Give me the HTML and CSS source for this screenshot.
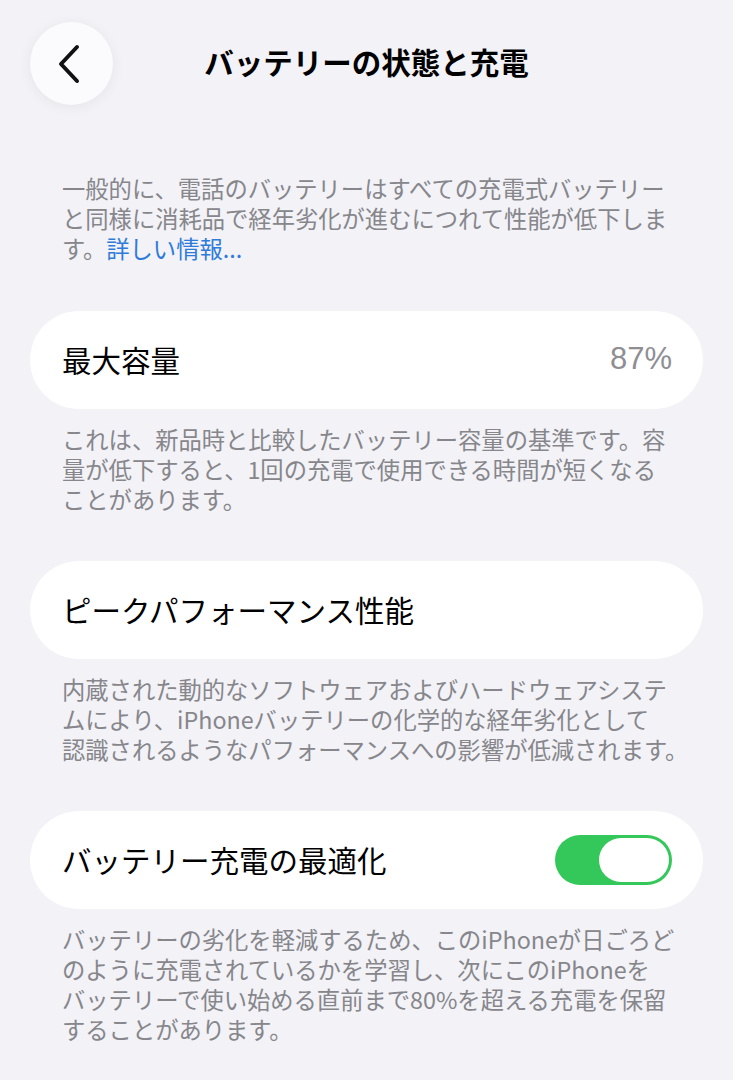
FILE: index.html
```html
<!DOCTYPE html>
<html lang="ja">
<head>
<meta charset="utf-8">
<link rel="stylesheet" href="styles.css">
</head>
<body>
<div class="page">
  <header class="nav">
    <button class="back" aria-label="戻る">
      <svg width="24" height="40" viewBox="0 0 24 40"><path d="M20 3 L4 20 L20 37" fill="none" stroke="#111" stroke-width="4" stroke-linecap="round" stroke-linejoin="round"/></svg>
    </button>
    <h1 class="title">バッテリーの状態と充電</h1>
    <span></span>
  </header>

  <p class="note intro">一般的に、電話のバッテリーはすべての充電式バッテリー<br>と同様に消耗品で経年劣化が進むにつれて性能が低下しま<br>す。<a class="link">詳しい情報...</a></p>

  <div class="card card-first">
    <span class="label">最大容量</span>
    <span class="value">87%</span>
  </div>
  <p class="note">これは、新品時と比較したバッテリー容量の基準です。容<br>量が低下すると、1回の充電で使用できる時間が短くなる<br>ことがあります。</p>

  <div class="card">
    <span class="label">ピークパフォーマンス性能</span>
  </div>
  <p class="note">内蔵された動的なソフトウェアおよびハードウェアシステ<br>ムにより、iPhoneバッテリーの化学的な経年劣化として<br>認識されるようなパフォーマンスへの影響が低減されます。</p>

  <div class="card">
    <span class="label">バッテリー充電の最適化</span>
    <span class="toggle"><span class="knob"></span></span>
  </div>
  <p class="note">バッテリーの劣化を軽減するため、このiPhoneが日ごろど<br>のように充電されているかを学習し、次にこのiPhoneを<br>バッテリーで使い始める直前まで80%を超える充電を保留<br>することがあります。</p>
</div>
</body>
</html>
```
FILE: styles.css
```css
* { box-sizing: border-box; }
html, body { margin: 0; padding: 0; }
body {
  background: #f2f2f7;
  font-family: "Noto Sans CJK JP", "Noto Sans", sans-serif;
  color: #000;
}
.page {
  width: 733px;
  padding: 22px 30px 0;
}
.nav {
  display: grid;
  grid-template-columns: 83px 1fr 83px;
  align-items: center;
  height: 83px;
}
.back {
  width: 83px;
  height: 83px;
  border-radius: 50%;
  border: none;
  background: #fbfbfd;
  box-shadow: 0 2px 14px rgba(0,0,0,0.06);
  display: flex;
  align-items: center;
  justify-content: center;
  padding: 0 6px 0 0;
}
.title {
  margin: 0 0 5px;
  text-align: center;
  font-size: 29.5px;
  font-weight: 700;
  line-height: 40px;
  white-space: nowrap;
}
.note {
  margin: 0;
  padding: 0 32px;
  font-size: 23.3px;
  line-height: 30px;
  color: #86868b;
  white-space: nowrap;
}
.intro { margin-top: 68px; }
.link { color: #2f7bd9; }
.card {
  background: #fff;
  border-radius: 50px;
  height: 98px;
  margin-top: 47px;
  margin-bottom: 15px;
  padding: 0 31px 3px 32px;
  display: flex;
  align-items: center;
  justify-content: space-between;
}
.card-first { margin-top: 48px; }
.label {
  font-size: 29.5px;
  line-height: 40px;
  white-space: nowrap;
}
.value {
  font-family: "Liberation Sans", "Noto Sans", sans-serif;
  font-size: 31px;
  color: #8e8e93;
}
.toggle {
  width: 117px;
  height: 50px;
  border-radius: 25px;
  background: #34c759;
  display: flex;
  justify-content: flex-end;
  align-items: center;
  padding: 3px;
  margin-top: 3px;
}
.knob {
  width: 70px;
  height: 44px;
  border-radius: 22px;
  background: #fff;
}
```
